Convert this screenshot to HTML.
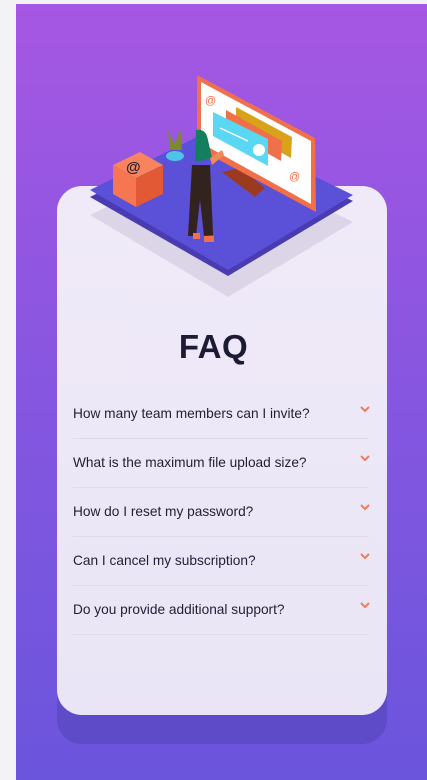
<!DOCTYPE html>
<html><head><meta charset="utf-8"><style>
html,body{margin:0;padding:0}
body{width:427px;height:780px;background:#f3f3f5;position:relative;overflow:hidden;font-family:"Liberation Sans",sans-serif}
.bg{position:absolute;left:16px;top:4px;width:411px;height:776px;background:linear-gradient(180deg,#a657e3 0%,#8656e0 50%,#6a55dc 100%)}
.shadow{position:absolute;left:57px;top:600px;width:330px;height:144px;border-radius:25px;background:#5d4bc7}
.card{position:absolute;left:57px;top:186px;width:330px;height:529px;border-radius:25px;background:linear-gradient(180deg,#f0eaf8,#e9e5f6)}
h1{position:absolute;left:0;width:427px;top:328px;margin:0;text-align:center;font-size:33px;font-weight:bold;color:#1c1b33;letter-spacing:0.5px}
.q{position:absolute;left:73px;width:296px;height:49px;border-bottom:1px solid #e0dae9;font-size:13.7px;color:#1f1f33}
.q span{position:absolute;left:0;top:17px}
.q svg{position:absolute;right:-1px;top:17px}
</style></head><body>
<div class="bg"></div>
<div class="shadow"></div>
<div class="card"></div>
<svg style="position:absolute;left:0;top:0" width="427" height="320">
<polygon points="90,215 215,155 353,222 228,297" fill="#dcd5e8"/>
<polygon points="90,193 215,130 353,197 228,272 " fill="#4b3bb0" transform="translate(0,4)"/>
<polygon points="90,190 215,128 353,195 228,270" fill="#5b50d8"/>
<polygon points="113,165 140,152 163,165 136,178" fill="#f7845e"/>
<polygon points="113,165 136,178 136,207 113,194" fill="#f57650"/>
<polygon points="136,178 163,165 163,194 136,207" fill="#e15a35"/>
<text x="126" y="172" font-size="15" font-weight="bold" fill="#2a1f2a" font-family="Liberation Sans">@</text>
<ellipse cx="175" cy="156" rx="9" ry="5" fill="#4fc3e8"/>
<path d="M170,150 L168,130 L175,145 L180,128 L182,150 Z" fill="#7d8a28"/>
<polygon points="222,172 240,168 265,188 255,197" fill="#9a3b20"/>
<polygon points="197,75 315,138 316,212 197,148" fill="#f0704a"/>
<polygon points="201,82 311,141 311,204 201,143" fill="#fff"/>
<polygon points="236,107 292,137 291,158 236,128" fill="#d9a21b"/>
<polygon points="226,110 282,141 281,161 226,130" fill="#f0704a"/>
<polygon points="213,112 268,139 268,166 213,136" fill="#5ad7f2"/>
<circle cx="259" cy="150" r="6" fill="#fff"/>
<line x1="220" y1="128" x2="248" y2="141" stroke="#fff" stroke-width="1.5"/>
<text x="205" y="104" font-size="11" fill="#f0704a" font-family="Liberation Sans">@</text>
<text x="289" y="180" font-size="11" fill="#f0704a" font-family="Liberation Sans">@</text>
<path d="M196,130 Q206,128 208,140 L212,158 L195,162 Z" fill="#147f5e"/>
<path d="M210,158 L222,150 L224,155 L212,165 Z" fill="#f08a5a"/>
<path d="M192,165 L210,165 L213,235 L204,236 L200,200 L196,236 L188,236 Z" fill="#33231f"/>
<rect x="193" y="233" width="7" height="6" fill="#f0704a"/><rect x="204" y="236" width="10" height="6" fill="#f0704a"/>
</svg>
<h1>FAQ</h1>
<div class="q" style="top:389px"><span>How many team members can I invite?</span><svg width="10" height="7"><path d="M1,1 L5,5 L9,1" fill="none" stroke="#f27c57" stroke-width="2"/></svg></div>
<div class="q" style="top:438px"><span>What is the maximum file upload size?</span><svg width="10" height="7"><path d="M1,1 L5,5 L9,1" fill="none" stroke="#f27c57" stroke-width="2"/></svg></div>
<div class="q" style="top:487px"><span>How do I reset my password?</span><svg width="10" height="7"><path d="M1,1 L5,5 L9,1" fill="none" stroke="#f27c57" stroke-width="2"/></svg></div>
<div class="q" style="top:536px"><span>Can I cancel my subscription?</span><svg width="10" height="7"><path d="M1,1 L5,5 L9,1" fill="none" stroke="#f27c57" stroke-width="2"/></svg></div>
<div class="q" style="top:585px"><span>Do you provide additional support?</span><svg width="10" height="7"><path d="M1,1 L5,5 L9,1" fill="none" stroke="#f27c57" stroke-width="2"/></svg></div>
</body></html>
